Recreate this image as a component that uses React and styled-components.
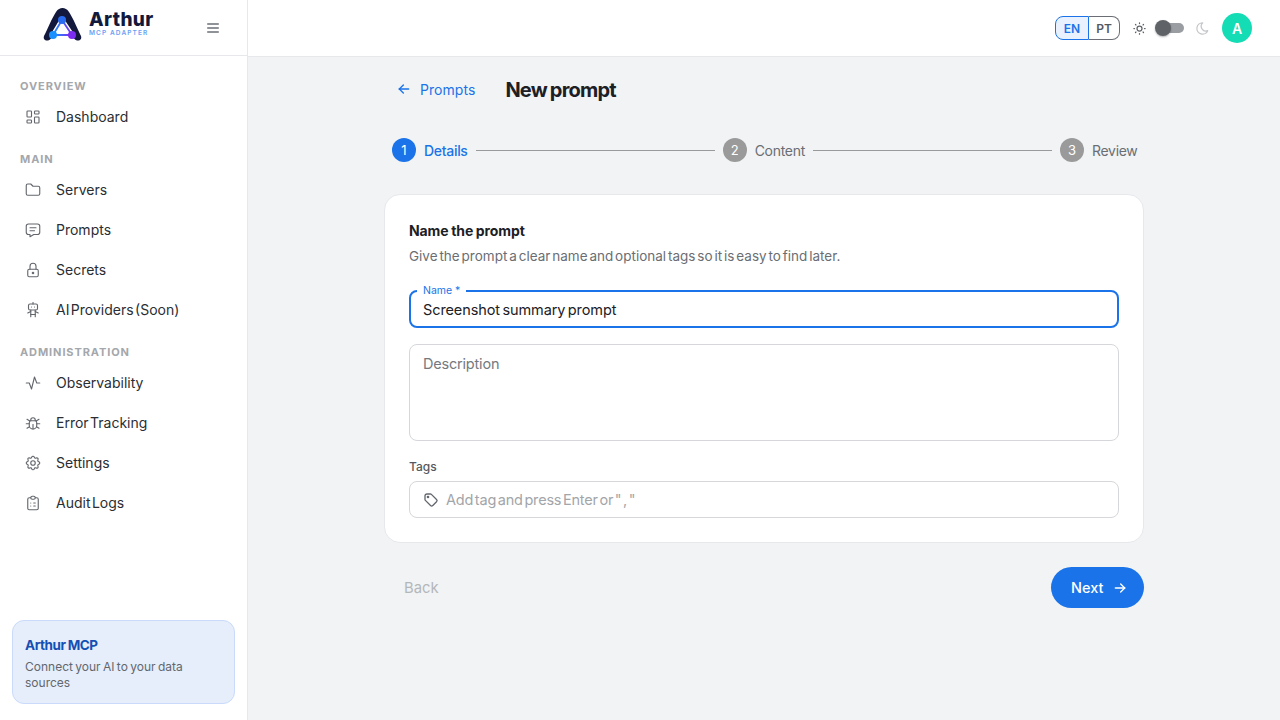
import styled, { createGlobalStyle } from "styled-components";
import {
    TbLayoutDashboard, TbFolder, TbMessage, TbLock, TbRobot, TbActivity, TbBug,
    TbSettings, TbClipboardList, TbTag, TbSun, TbMoon, TbMenu2, TbArrowLeft, TbArrowRight,
} from "react-icons/tb";

const GlobalStyle = createGlobalStyle`
    html, body { margin: 0; padding: 0; height: 100%; }
    body { font-family: "Inter", "Noto Sans", sans-serif; color: #1c2025; background: #f1f3f5; }
    * { box-sizing: border-box; }
`;

const Shell = styled.div`
    display: flex;
    width: 1280px;
    height: 720px;
    overflow: hidden;
`;

// sidebar
const Sidebar = styled.aside`
    width: 248px;
    flex: none;
    display: flex;
    flex-direction: column;
    background: #fff;
    border-right: 1px solid #e6e8eb;
`;

const LogoBar = styled.div`
    height: 56px;
    flex: none;
    display: flex;
    align-items: center;
    justify-content: space-between;
    padding: 0 26px 0 43px;
    border-bottom: 1px solid #e6e8eb;
`;

const LogoWrap = styled.div`
    display: flex;
    align-items: center;
    gap: 6px;
    margin-top: -7px;
`;

const LogoText = styled.div`
    display: flex;
    flex-direction: column;
    gap: 2px;
`;

const LogoName = styled.span`
    font-size: 19px;
    line-height: 16px;
    font-weight: 800;
    color: #12193d;
    letter-spacing: 0.35px;
`;

const LogoSub = styled.span`
    font-size: 6.5px;
    line-height: 7px;
    font-weight: 600;
    letter-spacing: 1.1px;
    color: #6aa0f6;
`;

const MenuButton = styled.span`
    display: flex;
    color: #6b7076;
`;

const Nav = styled.nav`
    display: flex;
    flex-direction: column;
    padding-top: 22px;
`;

const SectionLabel = styled.div`
    font-size: 11px;
    line-height: 16px;
    font-weight: 700;
    letter-spacing: 0.9px;
    color: #a4a7ab;
    padding-left: 20px;
    margin: ${({ $first }) => ($first ? "0" : "14px")} 0 3px;
`;

const NavItem = styled.div`
    height: 40px;
    display: flex;
    align-items: center;
    gap: 14px;
    padding: 0 0 1px 24px;
    font-size: 14px;
    font-weight: 400;
    color: #2a2e33;
    word-spacing: -2.5px;
    svg { color: #63676d; flex: none; }
`;

const FooterCard = styled.div`
    margin: auto 12px 16px;
    height: 84px;
    padding: 15px 12px 0;
    background: #e6eefb;
    border: 1px solid #c9dafa;
    border-radius: 12px;
`;

const FooterTitle = styled.div`
    font-size: 13.5px;
    line-height: 18px;
    font-weight: 700;
    letter-spacing: -0.45px;
    word-spacing: -0.5px;
    color: #1450b4;
`;

const FooterText = styled.div`
    margin-top: 5px;
    font-size: 12px;
    line-height: 16px;
    color: #62676e;
    word-spacing: -1px;
`;

// right side
const Body = styled.div`
    flex: 1;
    min-width: 0;
    display: flex;
    flex-direction: column;
`;

const TopBar = styled.header`
    height: 57px;
    flex: none;
    display: flex;
    align-items: center;
    justify-content: flex-end;
    padding-right: 28px;
    background: #fff;
    border-bottom: 1px solid #e6e8eb;
`;

const LangGroup = styled.div`
    display: flex;
    height: 24px;
    margin-right: 12px;
`;

const LangButton = styled.span`
    width: ${({ $active }) => ($active ? "34px" : "31px")};
    display: flex;
    align-items: center;
    justify-content: center;
    font-size: 12px;
    font-weight: 600;
    color: ${({ $active }) => ($active ? "#1a73e8" : "#55595f")};
    background: ${({ $active }) => ($active ? "#e8f1fd" : "#fff")};
    border: 1px solid ${({ $active }) => ($active ? "#1a73e8" : "#6b6f75")};
    border-left-width: ${({ $active }) => ($active ? "1px" : "0")};
    border-radius: ${({ $active }) => ($active ? "8px 0 0 8px" : "0 8px 8px 0")};
`;

const ThemeIcon = styled.span`
    display: flex;
    color: ${({ $dim }) => ($dim ? "#c4c6c9" : "#5f6368")};
`;

const Switch = styled.span`
    position: relative;
    display: block;
    width: 26px;
    height: 10px;
    margin: 0 11px;
    border-radius: 5px;
    background: #9a9da1;
`;

const SwitchThumb = styled.span`
    position: absolute;
    left: -3px;
    top: -3px;
    width: 16px;
    height: 16px;
    border-radius: 50%;
    background: #5f6368;
    box-shadow: 0 1px 2px rgba(0, 0, 0, 0.3);
`;

const Avatar = styled.span`
    width: 30px;
    height: 30px;
    margin-left: 12px;
    display: flex;
    align-items: center;
    justify-content: center;
    border-radius: 50%;
    background: #14dcb4;
    color: #fff;
    font-size: 14px;
    font-weight: 600;
`;

const Main = styled.main`
    flex: 1;
    background: #f1f3f5;
    display: flex;
    justify-content: center;
`;

const Column = styled.div`
    width: 760px;
    padding-top: 17px;
`;

const TitleRow = styled.div`
    display: flex;
    align-items: center;
    height: 32px;
    padding-left: 12px;
`;

const BackLink = styled.span`
    display: flex;
    align-items: center;
    gap: 8px;
    padding-bottom: 2px;
    font-size: 14px;
    color: #1a73e8;
    letter-spacing: 0.05px;
    margin-right: 30px;
`;

const PageTitle = styled.h1`
    margin: 0;
    font-size: 20px;
    line-height: 32px;
    font-weight: 700;
    letter-spacing: -0.8px;
    word-spacing: -1px;
    color: #1c2025;
`;

const Stepper = styled.div`
    display: flex;
    align-items: center;
    margin-top: 32px;
    padding: 0 6.5px 0 8px;
    height: 24px;
`;

const StepDot = styled.span`
    width: 24px;
    height: 24px;
    flex: none;
    display: flex;
    align-items: center;
    justify-content: center;
    border-radius: 50%;
    font-size: 13px;
    color: #fff;
    background: ${({ $active }) => ($active ? "#1a73e8" : "#9a9a9a")};
`;

const StepLabel = styled.span`
    margin-left: 8px;
    font-size: 14px;
    letter-spacing: -0.3px;
    font-weight: ${({ $active }) => ($active ? 500 : 400)};
    color: ${({ $active }) => ($active ? "#1a73e8" : "#6a6e73")};
`;

const StepLine = styled.span`
    flex: 1;
    height: 1px;
    margin: 0 8px;
    background: #9a9a9a;
`;

const Card = styled.section`
    margin-top: 32px;
    height: 349px;
    padding: 25px 24px 0;
    background: #fff;
    border: 1px solid #e6e8eb;
    border-radius: 16px;
`;

const CardTitle = styled.h2`
    margin: 0;
    font-size: 14px;
    line-height: 22px;
    font-weight: 700;
    letter-spacing: -0.1px;
    word-spacing: -0.5px;
    color: #1c2025;
`;

const CardHint = styled.p`
    margin: 4px 0 0;
    font-size: 13.5px;
    line-height: 20px;
    color: #6a6e73;
    word-spacing: -1.9px;
`;

const NameField = styled.div`
    position: relative;
    margin-top: 24px;
    height: 38px;
    padding: 0 12px;
    display: flex;
    align-items: center;
    border: 2px solid #1a73e8;
    border-radius: 8px;
    font-size: 14.5px;
    color: #1c2025;
    letter-spacing: -0.1px;
    word-spacing: -1.5px;
`;

const FloatLabel = styled.span`
    position: absolute;
    left: 6px;
    top: -8px;
    padding: 0 6px;
    background: #fff;
    font-size: 10.5px;
    line-height: 14px;
    letter-spacing: 0;
    word-spacing: 0;
    color: #1a73e8;
`;

const DescField = styled.div`
    margin-top: 16px;
    height: 97px;
    padding: 9px 13px;
    border: 1px solid #d5d7da;
    border-radius: 8px;
    font-size: 14.5px;
    line-height: 20px;
    letter-spacing: -0.2px;
    color: #75797e;
`;

const TagsLabel = styled.div`
    margin-top: 18px;
    font-size: 12px;
    line-height: 16px;
    font-weight: 500;
    color: #55595f;
`;

const TagsField = styled.div`
    margin-top: 6px;
    height: 37px;
    padding: 0 13px;
    display: flex;
    align-items: center;
    gap: 7px;
    border: 1px solid #d5d7da;
    border-radius: 8px;
    font-size: 14.5px;
    color: #a2a5a9;
    letter-spacing: -0.2px;
    word-spacing: -2.2px;
    svg { color: #63676d; flex: none; }
`;

const Actions = styled.div`
    display: flex;
    align-items: center;
    justify-content: space-between;
    margin-top: 24px;
    padding-left: 20px;
`;

const BackButton = styled.span`
    font-size: 14.8px;
    font-weight: 400;
    color: #b4b7ba;
`;

const NextButton = styled.span`
    height: 41px;
    width: 93px;
    padding-left: 20px;
    display: flex;
    align-items: center;
    gap: 9px;
    border-radius: 21px;
    background: #1a73e8;
    color: #fff;
    font-size: 14.5px;
    font-weight: 500;
`;

function ArthurMark() {
    return (
        <svg width="40" height="33" viewBox="0 0 40 33">
            <defs>
                <linearGradient id="tri" x1="0" y1="0" x2="1" y2="0">
                    <stop offset="0" stopColor="#1a90ff" />
                    <stop offset="1" stopColor="#7a2cf0" />
                </linearGradient>
            </defs>
            <path d="M1 28 C5 20 9 10 13 4 C15 1 17 0 19.5 0 C22 0 24 1 26 4 C30 10 34 20 38 28 C39 31 37 33 34 32.5 C32 32 31 30 29 29 H10 C8 30 7 32 5 32.5 C2 33 0 31 1 28 Z" fill="#12193d" />
            <path d="M19 12 L10 27 H29 Z" fill="#fff" stroke="#fff" strokeWidth="4.5" strokeLinejoin="round" />
            <path d="M19 12 L10 27 H29 Z" fill="#fff" stroke="url(#tri)" strokeWidth="1.8" strokeLinejoin="round" />
            <circle cx="19" cy="12" r="4" fill="#2a6cf0" />
            <circle cx="10" cy="27" r="4" fill="#1a90ff" />
            <circle cx="29" cy="27" r="4" fill="#7a2cf0" />
        </svg>
    );
}

const sections = [
    { label: "OVERVIEW", items: [{ icon: TbLayoutDashboard, text: "Dashboard" }] },
    {
        label: "MAIN",
        items: [
            { icon: TbFolder, text: "Servers" },
            { icon: TbMessage, text: "Prompts" },
            { icon: TbLock, text: "Secrets" },
            { icon: TbRobot, text: "AI Providers (Soon)" },
        ],
    },
    {
        label: "ADMINISTRATION",
        items: [
            { icon: TbActivity, text: "Observability" },
            { icon: TbBug, text: "Error Tracking" },
            { icon: TbSettings, text: "Settings" },
            { icon: TbClipboardList, text: "Audit Logs" },
        ],
    },
];

export default function App() {
    return (
        <Shell>
            <GlobalStyle />
            <Sidebar>
                <LogoBar>
                    <LogoWrap>
                        <ArthurMark />
                        <LogoText>
                            <LogoName>Arthur</LogoName>
                            <LogoSub>MCP ADAPTER</LogoSub>
                        </LogoText>
                    </LogoWrap>
                    <MenuButton><TbMenu2 size={16} /></MenuButton>
                </LogoBar>
                <Nav>
                    {sections.map((section, i) => (
                        <div key={section.label}>
                            <SectionLabel $first={i === 0}>{section.label}</SectionLabel>
                            {section.items.map(({ icon: Icon, text }) => (
                                <NavItem key={text}>
                                    <Icon size={18} strokeWidth={1.5} />
                                    {text}
                                </NavItem>
                            ))}
                        </div>
                    ))}
                </Nav>
                <FooterCard>
                    <FooterTitle>Arthur MCP</FooterTitle>
                    <FooterText>Connect your AI to your data sources</FooterText>
                </FooterCard>
            </Sidebar>
            <Body>
                <TopBar>
                    <LangGroup>
                        <LangButton $active>EN</LangButton>
                        <LangButton>PT</LangButton>
                    </LangGroup>
                    <ThemeIcon><TbSun size={15} /></ThemeIcon>
                    <Switch><SwitchThumb /></Switch>
                    <ThemeIcon $dim><TbMoon size={15} /></ThemeIcon>
                    <Avatar>A</Avatar>
                </TopBar>
                <Main>
                    <Column>
                        <TitleRow>
                            <BackLink><TbArrowLeft size={16} />Prompts</BackLink>
                            <PageTitle>New prompt</PageTitle>
                        </TitleRow>
                        <Stepper>
                            <StepDot $active>1</StepDot>
                            <StepLabel $active>Details</StepLabel>
                            <StepLine />
                            <StepDot>2</StepDot>
                            <StepLabel>Content</StepLabel>
                            <StepLine />
                            <StepDot>3</StepDot>
                            <StepLabel>Review</StepLabel>
                        </Stepper>
                        <Card>
                            <CardTitle>Name the prompt</CardTitle>
                            <CardHint>Give the prompt a clear name and optional tags so it is easy to find later.</CardHint>
                            <NameField>
                                <FloatLabel>Name *</FloatLabel>
                                Screenshot summary prompt
                            </NameField>
                            <DescField>Description</DescField>
                            <TagsLabel>Tags</TagsLabel>
                            <TagsField>
                                <TbTag size={16} />
                                Add tag and press Enter or " , "
                            </TagsField>
                        </Card>
                        <Actions>
                            <BackButton>Back</BackButton>
                            <NextButton>Next<TbArrowRight size={16} /></NextButton>
                        </Actions>
                    </Column>
                </Main>
            </Body>
        </Shell>
    );
}
